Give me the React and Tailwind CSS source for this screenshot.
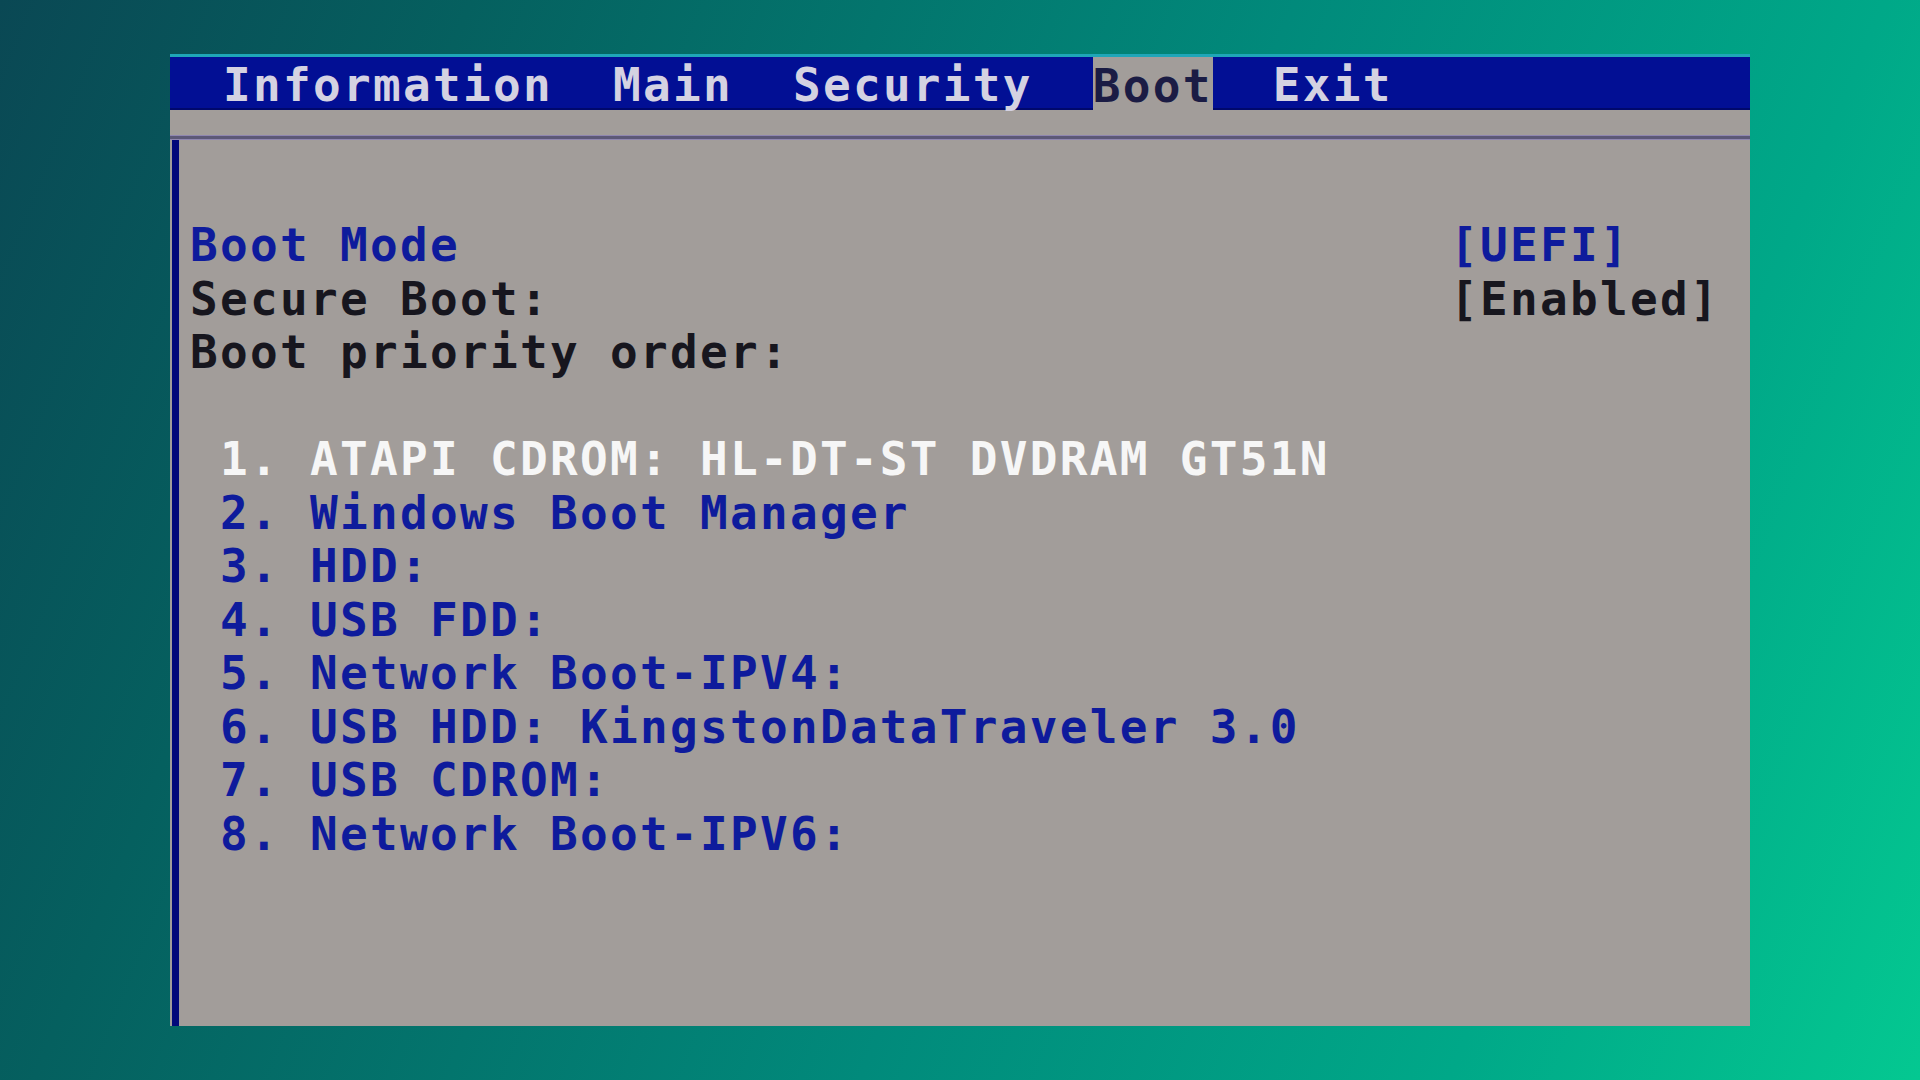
import React from "react";

const mono = {
  fontFamily: '"DejaVu Sans Mono", "Liberation Mono", monospace',
};

const items = [
  "ATAPI CDROM: HL-DT-ST DVDRAM GT51N",
  "Windows Boot Manager",
  "HDD:",
  "USB FDD:",
  "Network Boot-IPV4:",
  "USB HDD: KingstonDataTraveler 3.0",
  "USB CDROM:",
  "Network Boot-IPV6:",
];

export default function App() {
  return (
    <div className="w-[1920px] h-[1080px] overflow-hidden bg-[linear-gradient(112deg,#0a4854_0%,#05605f_20%,#018a7b_55%,#00a888_80%,#04c891_100%)] pl-[170px] pt-[54px]">
      <div
        className="w-[1580px] h-[972px] flex flex-col bg-[#a29d9a] font-bold text-[46px] tracking-[2.3px]"
        style={mono}
      >
        <div className="h-[3px] bg-[#1fa6b8]" />
        <div className="h-[53px] flex bg-[#020f94] border-b-2 border-[#00086c] pl-[53px] whitespace-pre leading-none">
          <span className="flex items-center pt-[4px] text-[#d4d2e2]">Information  Main  Security  </span>
          <span className="flex items-center pt-[4px] bg-[#a29d9a] text-[#1b1c44] -mb-[2px]">Boot</span>
          <span className="flex items-center pt-[4px] text-[#d4d2e2]">  Exit</span>
        </div>
        <div className="h-[25px]" />
        <div className="h-[5px] bg-[#5c5877] border-y border-[#8f86b0]" />
        <div className="flex-1 ml-[2px] border-l-[7px] border-[#03097a] pl-[11px] pt-[79px] leading-[53.5px] whitespace-pre">
          <div className="flex">
            <span className="w-[1260px] text-[#0e1b9c]">Boot Mode</span>
            <span className="text-[#0e1b9c]">[UEFI]</span>
          </div>
          <div className="flex">
            <span className="w-[1260px] text-[#17161e]">Secure Boot:</span>
            <span className="text-[#17161e]">[Enabled]</span>
          </div>
          <div className="text-[#17161e]">Boot priority order:</div>
          <div className="h-[53.5px]" />
          {items.map((t, i) => (
            <div
              key={i}
              className={i === 0 ? "text-[#f6f6f6]" : "text-[#0e1b9c]"}
            >
              {` ${i + 1}. ${t}`}
            </div>
          ))}
        </div>
      </div>
    </div>
  );
}
